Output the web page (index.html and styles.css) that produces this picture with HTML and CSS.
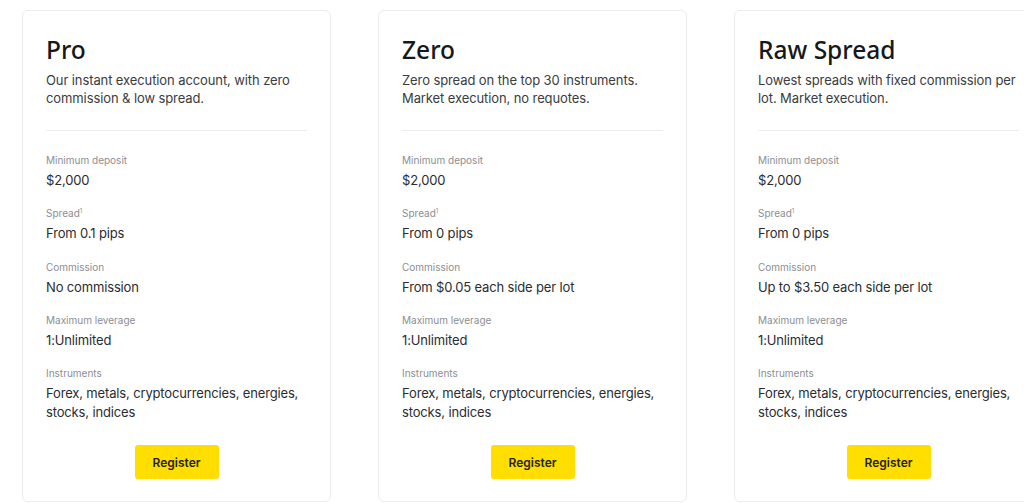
FILE: index.html
```html
<!DOCTYPE html>
<html>
<head>
<meta charset="utf-8">
<link rel="stylesheet" href="styles.css">
</head>
<body>
<div class="cards">
  <div class="card">
    <h2 class="title">Pro</h2>
    <p class="desc">Our instant execution account, with zero commission &amp; low spread.</p>
    <div class="divider"></div>
    <div class="rows">
      <div class="row"><div class="label">Minimum deposit</div><div class="value">$2,000</div></div>
      <div class="row"><div class="label">Spread<sup>1</sup></div><div class="value">From 0.1 pips</div></div>
      <div class="row"><div class="label">Commission</div><div class="value">No commission</div></div>
      <div class="row"><div class="label">Maximum leverage</div><div class="value">1:Unlimited</div></div>
      <div class="row"><div class="label">Instruments</div><div class="value">Forex, metals, cryptocurrencies, energies, stocks, indices</div></div>
    </div>
    <div class="actions"><button class="btn">Register</button></div>
  </div>
  <div class="card">
    <h2 class="title">Zero</h2>
    <p class="desc">Zero spread on the top 30 instruments. Market execution, no requotes.</p>
    <div class="divider"></div>
    <div class="rows">
      <div class="row"><div class="label">Minimum deposit</div><div class="value">$2,000</div></div>
      <div class="row"><div class="label">Spread<sup>1</sup></div><div class="value">From 0 pips</div></div>
      <div class="row"><div class="label">Commission</div><div class="value">From $0.05 each side per lot</div></div>
      <div class="row"><div class="label">Maximum leverage</div><div class="value">1:Unlimited</div></div>
      <div class="row"><div class="label">Instruments</div><div class="value">Forex, metals, cryptocurrencies, energies, stocks, indices</div></div>
    </div>
    <div class="actions"><button class="btn">Register</button></div>
  </div>
  <div class="card">
    <h2 class="title">Raw Spread</h2>
    <p class="desc">Lowest spreads with fixed commission per lot. Market execution.</p>
    <div class="divider"></div>
    <div class="rows">
      <div class="row"><div class="label">Minimum deposit</div><div class="value">$2,000</div></div>
      <div class="row"><div class="label">Spread<sup>1</sup></div><div class="value">From 0 pips</div></div>
      <div class="row"><div class="label">Commission</div><div class="value">Up to $3.50 each side per lot</div></div>
      <div class="row"><div class="label">Maximum leverage</div><div class="value">1:Unlimited</div></div>
      <div class="row"><div class="label">Instruments</div><div class="value">Forex, metals, cryptocurrencies, energies, stocks, indices</div></div>
    </div>
    <div class="actions"><button class="btn">Register</button></div>
  </div>
</div>
</body>
</html>
```
FILE: styles.css
```css
html, body {
  margin: 0;
  padding: 0;
  background: #ffffff;
  overflow: hidden;
}
body {
  font-family: Inter, "Noto Sans", sans-serif;
  color: #1f2124;
}
.cards {
  display: flex;
  gap: 47px;
  padding: 10px 0 0 22px;
  width: 1100px;
}
.card {
  flex: 0 0 309px;
  box-sizing: border-box;
  height: 492px;
  border: 1px solid #ececec;
  border-radius: 6px;
  padding: 25px 23px 0 23px;
}
.title {
  margin: 0;
  font-family: "Noto Sans", Inter, sans-serif;
  font-weight: 500;
  font-size: 24.5px;
  line-height: 28px;
  color: #16181b;
}
.desc {
  margin: 7px 0 0 0;
  font-size: 13px;
  line-height: 18px;
  color: #3a3c40;
  letter-spacing: -0.1px;
}
.divider {
  height: 1px;
  background: #ececec;
  margin-top: 23px;
}
.rows {
  display: flex;
  flex-direction: column;
  gap: 16.3px;
  margin-top: 22px;
}
.label {
  font-size: 10px;
  line-height: 14px;
  color: #8c8e92;
}
.label sup {
  font-size: 6px;
  vertical-align: 4px;
  line-height: 0;
}
.value {
  margin-top: 4px;
  font-size: 13px;
  line-height: 19px;
  color: #2a2c30;
  letter-spacing: -0.15px;
}
.actions {
  display: flex;
  justify-content: center;
  margin-top: 23px;
}
.btn {
  width: 84px;
  height: 34px;
  border: none;
  border-radius: 3px;
  background: #ffde00;
  font-family: Inter, sans-serif;
  font-weight: 600;
  font-size: 12px;
  color: #1e1e1e;
}
```
